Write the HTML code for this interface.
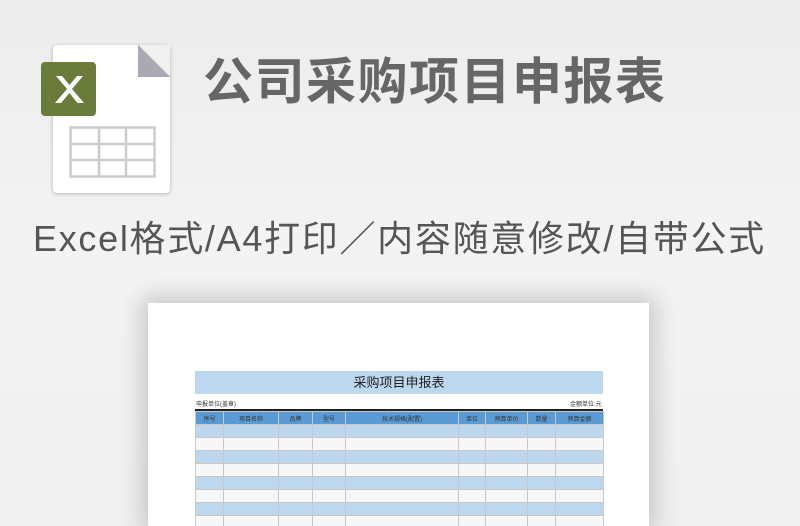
<!DOCTYPE html>
<html><head><meta charset="utf-8"><style>
*{margin:0;padding:0;box-sizing:border-box}
html,body{width:800px;height:526px;overflow:hidden}
body{position:relative;background:linear-gradient(180deg,#ececec 0%,#f3f3f3 45%,#f0f0f0 100%);font-family:"Liberation Sans","Noto Sans CJK SC",sans-serif}
.abs{position:absolute}
.title{left:203px;top:48px;font-size:50px;font-weight:bold;color:#666;letter-spacing:1.5px;line-height:68px;white-space:nowrap}
.sub{left:33px;top:214px;font-size:36px;color:#555;line-height:50px;white-space:nowrap;letter-spacing:1.7px}
.paper{left:148px;top:303px;width:501px;height:223px;background:#fff;box-shadow:0 0 22px 6px rgba(0,0,0,0.18)}
table{border-collapse:collapse;table-layout:fixed}
td{border:1px solid #c8c8c8;height:13px;font-size:6px;text-align:center;color:#333}
</style></head><body>
<div class="abs" style="left:53px;top:45px;width:117px;height:148px;background:#fff;border-radius:4px;box-shadow:0 1px 4px rgba(0,0,0,0.25)"></div>
<div class="abs" style="left:138px;top:45px;width:32px;height:32px;background:linear-gradient(225deg,#f0f0f0 50%,#a9a9b4 50%)"></div>
<div class="abs" style="left:41px;top:62px;width:55px;height:54px;background:#6b7b3a;border-radius:4px"></div>
<svg class="abs" style="left:41px;top:62px" width="55" height="54"><path d="M15 14 L26 27 L14 41 H20 L28.5 31 L36.5 41 H43 L31 27 L42 14 H36 L28.5 23 L21 14 Z" fill="#fff"/></svg>
<svg class="abs" style="left:69px;top:126px" width="87" height="52"><g fill="none" stroke="#ccc" stroke-width="2.5"><rect x="1.5" y="1.5" width="84" height="49"/><line x1="30" y1="1" x2="30" y2="51"/><line x1="57" y1="1" x2="57" y2="51"/><line x1="1" y1="18" x2="86" y2="18"/><line x1="1" y1="34" x2="86" y2="34"/></g></svg>
<div class="abs title">公司采购项目申报表</div>
<div class="abs sub">Excel格式/A4打印／内容随意修改/自带公式</div>
<div class="abs paper"></div>
<div class="abs" style="left:195px;top:371px;width:408px;height:23px;background:#bdd7ee;font-size:13px;text-align:center;line-height:23px;color:#222">采购项目申报表</div>
<div class="abs" style="left:196px;top:399px;font-size:6px;color:#333">申报单位(盖章)</div>
<div class="abs" style="left:570px;top:399px;font-size:6px;color:#333">金额单位:元</div>
<div class="abs" style="left:195px;top:409px;width:408px;height:2px;background:#222"></div>
<table class="abs" style="left:195px;top:411px;width:408px">
<colgroup><col style="width:28px"><col style="width:55px"><col style="width:34px"><col style="width:33px"><col style="width:113px"><col style="width:27px"><col style="width:42px"><col style="width:28px"><col style="width:48px"></colgroup>
<tr style="background:#5b9bd5"><td>序号</td><td>项目名称</td><td>品牌</td><td>型号</td><td>技术规格(配置)</td><td>单位</td><td>预算单价</td><td>数量</td><td>预算金额</td></tr>
<tr style="background:#bdd7ee"><td></td><td></td><td></td><td></td><td></td><td></td><td></td><td></td><td></td></tr>
<tr style="background:#f7f7f7"><td></td><td></td><td></td><td></td><td></td><td></td><td></td><td></td><td></td></tr>
<tr style="background:#bdd7ee"><td></td><td></td><td></td><td></td><td></td><td></td><td></td><td></td><td></td></tr>
<tr style="background:#f7f7f7"><td></td><td></td><td></td><td></td><td></td><td></td><td></td><td></td><td></td></tr>
<tr style="background:#bdd7ee"><td></td><td></td><td></td><td></td><td></td><td></td><td></td><td></td><td></td></tr>
<tr style="background:#f7f7f7"><td></td><td></td><td></td><td></td><td></td><td></td><td></td><td></td><td></td></tr>
<tr style="background:#bdd7ee"><td></td><td></td><td></td><td></td><td></td><td></td><td></td><td></td><td></td></tr>
<tr style="background:#f7f7f7"><td></td><td></td><td></td><td></td><td></td><td></td><td></td><td></td><td></td></tr>
</table>
</body></html>
